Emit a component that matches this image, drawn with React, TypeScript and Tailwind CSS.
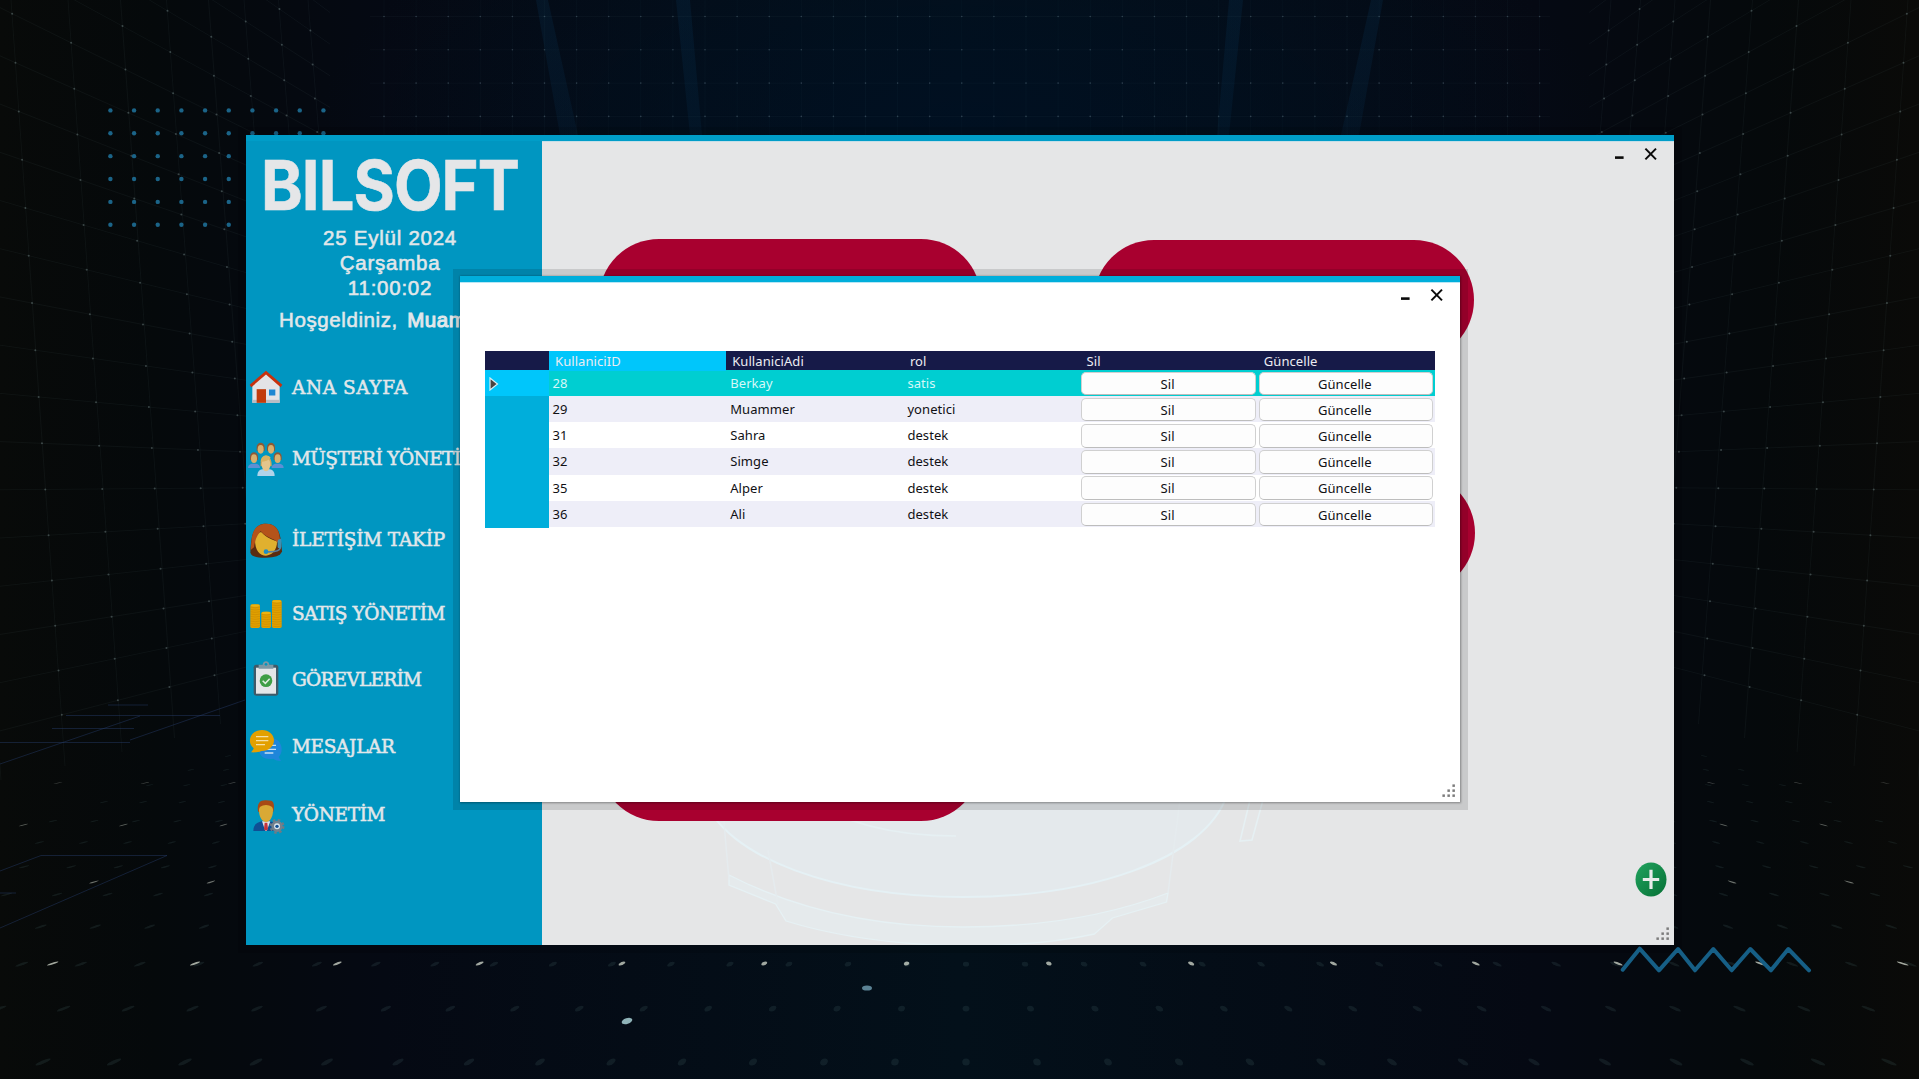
import React from "react";

const HORIZON = 482;
const CENTER = 960;

function Backdrop() {
  const columns = [-46, 18, 75, 127.5, 173.5, 215.5, 251, 285.5, 315];
  const rows = Array.from({ length: 21 }, (_, i) => 88.7 + 44.5 * (i - 6));
  const walls: React.ReactNode[] = [];
  const rowY = (base: number, x: number) => HORIZON + ((base - HORIZON) * (CENTER - x)) / (CENTER - 74);
  rows.forEach((base, i) => {
    if (base > 800) return;
    walls.push(<line key={"r" + i} x1={-10} y1={rowY(base, -10)} x2={330} y2={rowY(base, 330)} stroke="#8fb0b8" strokeOpacity={0.055} />);
    columns.forEach((c, j) => {
      const y0 = rowY(base, c);
      const x = c + 0.07 * (y0 - 100);
      walls.push(<circle key={"d" + i + "-" + j} cx={x} cy={rowY(base, x)} r={1} fill="#8fa5a5" fillOpacity={0.36} />);
    });
  });
  columns.forEach((c, j) =>
    walls.push(<line key={"c" + j} x1={c - 7} y1={0} x2={c + 47} y2={780 - j * 14} stroke="#8fb0b8" strokeOpacity={0.055} />),
  );

  const floor: React.ReactNode[] = [];
  for (let n = 0; n < 14; n++) {
    const d = 1 / (0.001724 + 0.000175 * n);
    const step = d * 0.1224;
    const y = HORIZON + d;
    for (let k = -22; k <= 22; k++) {
      const x = 966 + k * step;
      if (x < -20 || x > 1940) continue;
      floor.push(
        <ellipse key={n + "f" + k} rx={d * 0.0065} ry={d * d * 0.0000105} fill="#5f8584" fillOpacity={0.15} transform={`matrix(1 0 ${((x - CENTER) / d) * 1.2} 1 ${x} ${y})`} />,
      );
    }
  }
  const bright = [
    { y: 963.5, step: 142.3, x: 977.7 + 71.15, o: 0.75, r: 2.6 },
    { y: 882, step: 117, x: 970 + 60, o: 0.5, r: 2 },
    { y: 825, step: 100, x: 1023.5, o: 0.4, r: 1.6 },
    { y: 783, step: 87, x: 1015, o: 0.3, r: 1.4 },
  ];
  bright.forEach((b) => {
    for (let k = -13; k <= 13; k++) {
      const x = b.x + k * b.step;
      floor.push(
        <ellipse key={b.y + "b" + k} rx={b.r} ry={b.r * 0.8} fill="#d5dccf" fillOpacity={b.o} transform={`matrix(1 0 ${((x - CENTER) / (b.y - HORIZON)) * 1.3} 1 ${x} ${b.y})`} />,
      );
    }
  });

  const back: React.ReactNode[] = [];
  for (let j = 0; j < 4; j++) {
    const y = 16.5 + j * 33.3;
    back.push(<line key={"h" + j} x1={370} y1={y} x2={1550} y2={y} stroke="#8fb0b8" strokeOpacity={0.04} />);
    for (let i = 0; i < 37; i++) back.push(<circle key={j + "p" + i} cx={384 + i * 32.1} cy={y} r={0.8} fill="#8fa5b5" fillOpacity={0.3} />);
  }
  for (let i = 0; i < 37; i++)
    back.push(<line key={"v" + i} x1={384 + i * 32.1} y1={0} x2={384 + i * 32.1} y2={135} stroke="#8fb0b8" strokeOpacity={0.03} />);

  const dots: React.ReactNode[] = [];
  for (let r = 0; r < 6; r++)
    for (let c = 0; c < 10; c++) dots.push(<circle key={r + "g" + c} cx={110.4 + c * 23.67} cy={110.4 + r * 22.87} r={2.2} fill="#1b6488" />);

  return (
    <svg className="absolute inset-0 h-full w-full" viewBox="0 0 1919 1079">
      <defs>
        <linearGradient id="base" x1="0" x2="1">
          <stop offset="0" stopColor="#080a09" />
          <stop offset="0.08" stopColor="#05090b" />
          <stop offset="0.2" stopColor="#050913" />
          <stop offset="0.5" stopColor="#03101a" />
          <stop offset="0.8" stopColor="#050913" />
          <stop offset="0.92" stopColor="#05090b" />
          <stop offset="1" stopColor="#0a0a08" />
        </linearGradient>
        <radialGradient id="glow" cx="0.5" cy="0.5" r="0.5">
          <stop offset="0" stopColor="#001022" stopOpacity="0.9" />
          <stop offset="1" stopColor="#001022" stopOpacity="0" />
        </radialGradient>
        <linearGradient id="beam" x1="0" y1="0" x2="0" y2="1">
          <stop offset="0" stopColor="#08385c" stopOpacity="0.22" />
          <stop offset="1" stopColor="#08385c" stopOpacity="0.16" />
        </linearGradient>
      </defs>
      <rect width="1919" height="1079" fill="url(#base)" />
      <ellipse cx="960" cy="120" rx="640" ry="260" fill="url(#glow)" />
      <path d="M548 0 L578 135 H560 L536 0Z M690 0 L702 135 H690 L676 0Z M1229 0 L1217 135 H1229 L1243 0Z M1371 0 L1341 135 H1359 L1383 0Z" fill="url(#beam)" />
      {back}
      <g>{walls}</g>
      <g transform="matrix(-1 0 0 1 1919 0)">{walls}</g>
      {floor}
      <g fill="none" stroke="#2a4478" strokeOpacity="0.4">
        <path d="M0 871 L41 855.5 H167 L0 928 M0 893 H16 M0 742.5 H130 M52 728.5 H134 M66 715.5 H220 M108 705 H148 M0 764 L140 716 M130 740 L245 700" />
      </g>
      <ellipse cx="867" cy="988" rx="5" ry="2.6" fill="#5b8294" />
      <ellipse cx="627" cy="1021" rx="5.5" ry="2.8" fill="#8fb3b8" transform="rotate(-18 627 1021)" />
      {dots}
    </svg>
  );
}

function Zigzag() {
  return (
    <svg className="absolute left-[1620px] top-[945px] h-[30px] w-[192px]" viewBox="1620 945 192 30">
      <path
        d="M1622.7 969.7 L1639.7 948.7 L1659 970.3 L1678 949 L1695 970.3 L1713.3 949 L1731.7 970.3 L1750.3 949 L1771 970.3 L1788.3 949 L1809 970.3"
        fill="none"
        stroke="#165f86"
        strokeWidth="4"
        strokeLinecap="round"
        strokeLinejoin="round"
      />
    </svg>
  );
}

function WindowButtons() {
  return (
    <svg className="h-[14px] w-[44px]" viewBox="0 0 44 14" fill="none" stroke="#0a0a0a">
      <path d="M1 10.6 H9.6" strokeWidth="2.6" />
      <path d="M31.4 1.6 L42 12.4 M42 1.6 L31.4 12.4" strokeWidth="2" />
    </svg>
  );
}

function Grip() {
  return (
    <svg className="h-[13px] w-[13px]" viewBox="0 0 13 13" fill="#7c7c7c">
      <rect x="10.4" y="0.4" width="2.5" height="2.5" />
      <rect x="5.4" y="5.4" width="2.5" height="2.5" />
      <rect x="10.4" y="5.4" width="2.5" height="2.5" />
      <rect x="0.4" y="10.4" width="2.5" height="2.5" />
      <rect x="5.4" y="10.4" width="2.5" height="2.5" />
      <rect x="10.4" y="10.4" width="2.5" height="2.5" />
    </svg>
  );
}

function Icon({ box, children }: { box: string; children: React.ReactNode }) {
  return (
    <svg className="h-9 w-9 shrink-0 overflow-visible" viewBox={box}>
      {children}
    </svg>
  );
}

const house = (
  <Icon box="24 58.5 108 108">
    <path d="M37 105 L78 70 L119 105 V160 H37Z" fill="#e3e3e6" />
    <path d="M37 151 H119 V160 H37Z" fill="#b9bcc4" />
    <path d="M78 64 L127 106 L122 113 L78 75 L34 113 L29 106Z" fill="#c8310d" />
    <rect x="50" y="119" width="28" height="41" fill="#c23c0c" />
    <rect x="87" y="120" width="19" height="18" fill="#1c87d2" />
  </Icon>
);

const person = (x: number, y: number, hair: string, shirt: string) => (
  <g transform={`translate(${x} ${y})`}>
    <path d="M-18 36 C-18 24 -8 23 0 23 C8 23 18 24 18 36Z" fill={shirt} />
    <path d="M-12 2 C-12 -16 12 -16 12 2 V12 H-12Z" fill={hair} />
    <ellipse cx="0" cy="8" rx="9" ry="13" fill="#d9b06d" />
  </g>
);

const people = (
  <Icon box="24 273 108 108">
    {person(62, 293, "#8b5a35", "#0096c1")}
    {person(93, 293, "#8b5a35", "#0096c1")}
    {person(42, 321, "#8d5938", "#5e8fd4")}
    {person(113, 321, "#8d5938", "#5e8fd4")}
    <path d="M52 381 C52 362 64 360 78 360 C92 360 104 362 104 381Z" fill="#b0d3ea" />
    <path d="M62 352 C58 310 97 308 95 352Z" fill="#cfa55a" />
    <ellipse cx="78" cy="346" rx="13" ry="21" fill="#e3c58c" />
    <path d="M62 338 C76 338 86 334 92 326 C84 315 62 318 62 338Z" fill="#d8b262" />
  </Icon>
);

const agent = (
  <Icon box="24 516.9 108 108">
    <path d="M31 612 C33 560 40 525 78 525 C118 525 123 562 126 608 C122 622 104 627 78 627 C50 627 36 624 31 612Z" fill="#5a2c10" />
    <path d="M45 570 C47 556 60 548 66 552 C80 568 96 572 111 578 C112 605 94 621 78 621 C60 621 44 606 45 570Z" fill="#e0b02f" />
    <path d="M34 580 C36 542 52 525 78 525 C108 525 120 544 120 580 L116 588 C110 568 82 572 62 547 C56 556 46 566 42 596 L32 604Z" fill="#b4531a" />
    <path d="M121 570 V598 C118 606 104 611 78 609" fill="none" stroke="#5b7f9e" strokeWidth="5" />
    <rect x="113" y="572" width="11" height="27" rx="5" fill="#3f8fb0" />
    <circle cx="78" cy="609" r="7" fill="#1d8fc4" />
  </Icon>
);

const coins = (x: number, top: number) => {
  const lines = [];
  for (let y = top + 8; y < 114; y += 7) lines.push(<path key={y} d={`M${x} ${y} q14.5 4 29 0`} stroke="#c98600" strokeWidth="1.6" fill="none" />);
  return (
    <g>
      <rect x={x} y={top} width="29" height={118 - top} rx="5" fill="#e0a000" />
      <ellipse cx={x + 14.5} cy={top + 4} rx="13" ry="3.5" fill="#edb312" />
      {lines}
    </g>
  );
};

const bars = (
  <Icon box="24 18.9 108 108">
    {coins(31, 47)}
    {coins(64, 69)}
    {coins(96, 34)}
  </Icon>
);

const clipboard = (
  <Icon box="24 216.9 108 108">
    <rect x="41" y="228" width="74" height="93" rx="8" fill="#3f5a68" />
    <rect x="48" y="237" width="60" height="78" fill="#e4e6e8" />
    <path d="M56 228 H68 C69 214 87 214 88 228 H100 V240 H56Z" fill="#7d98a5" />
    <circle cx="78" cy="227" r="4" fill="#0096c1" />
    <circle cx="78" cy="276" r="19" fill="#3f9e45" />
    <path d="M68 276 L76 284 L89 270" fill="none" stroke="#dfeee0" strokeWidth="4.5" />
  </Icon>
);

const chat = (
  <Icon box="24 417 108 108">
    <path d="M92 447 C112 447 125 462 125 481 C125 492 121 499 116 504 L123 516 C110 515 104 512 100 509 C72 514 58 500 57 484Z" fill="#1f86da" />
    <path d="M88 469 H108 M80 481 H108 M74 492 H100" stroke="#c8dff2" strokeWidth="4" />
    <path d="M66 423 C86 423 102 437 102 454 C102 473 84 487 64 486 C56 490 44 491 33 490 C38 484 41 480 41 478 C18 460 32 423 66 423Z" fill="#e3a000" />
    <path d="M48 443 H85 M48 455 H85 M48 467 H75" stroke="#f5dfa6" strokeWidth="3.5" />
  </Icon>
);

const manager = (
  <Icon box="24 621 108 108">
    <path d="M40 726 C40 706 52 700 66 697 H90 C104 700 116 706 116 726Z" fill="#0f4f94" />
    <path d="M66 697 H91 L80 726 H76Z" fill="#dfe3ea" />
    <path d="M74 701 H82 L84 720 L78 726 L72 720Z" fill="#c4343c" />
    <path d="M54 668 C50 640 62 633 78 634 L94 635 C104 640 103 656 100 668Z" fill="#a84a15" />
    <path d="M57 664 C57 652 64 650 78 648 C92 650 99 652 99 664 C99 684 90 699 78 699 C66 699 57 684 57 664Z" fill="#d9a935" />
    <circle cx="111" cy="712" r="19" fill="none" stroke="#6d7a85" strokeWidth="7" strokeDasharray="7.5 7.42" />
    <circle cx="111" cy="712" r="12.5" fill="none" stroke="#74808c" strokeWidth="9" />
    <circle cx="111" cy="712" r="9" fill="#dde4ec" />
    <circle cx="111" cy="712" r="5" fill="#0f4f94" />
  </Icon>
);

const menu = [
  { label: "ANA SAYFA", icon: house, gap: "mt-0", track: "tracking-[0.55px]" },
  { label: "MÜŞTERİ YÖNETİM", icon: people, gap: "mt-[35.5px]", track: "tracking-[-0.6px]" },
  { label: "İLETİŞİM TAKİP", icon: agent, gap: "mt-[45.3px]", track: "tracking-[-0.2px]" },
  { label: "SATIŞ YÖNETİM", icon: bars, gap: "mt-[38px]", track: "tracking-[-0.45px]" },
  { label: "GÖREVLERİM", icon: clipboard, gap: "mt-[30px]", track: "tracking-[-0.75px]" },
  { label: "MESAJLAR", icon: chat, gap: "mt-[30.7px]", track: "tracking-[-0.35px]" },
  { label: "YÖNETİM", icon: manager, gap: "mt-[32px]", track: "tracking-[-0.35px]" },
];

function Sidebar() {
  return (
    <aside className="h-full w-[296px] shrink-0 overflow-hidden bg-[#0096c1] text-[#e2e7ea]">
      <h1 className="ml-[14.5px] mt-[9px] h-[64px] w-[260px] origin-left scale-x-[0.915] whitespace-nowrap font-['Inter'] text-[69px] font-bold leading-[70px] tracking-[-1px] text-[#e5e6e8] [-webkit-text-stroke:0.6px_#e5e6e8]">
        BILSOFT
      </h1>
      <div className="mt-[11px] w-[288px] text-center font-['Liberation_Sans'] text-[20.5px] font-normal leading-[25px] tracking-[0.75px] [-webkit-text-stroke:0.55px_#e2e7ea]">
        <p>25 Eylül 2024</p>
        <p>Çarşamba</p>
        <p>11:00:02</p>
      </div>
      <p className="ml-[33px] mt-[7px] whitespace-nowrap font-['Liberation_Sans'] text-[20.5px] leading-[25px] tracking-[0.6px] [-webkit-text-stroke:0.55px_#e2e7ea]">
        Hoşgeldiniz, <span className="ml-[3px] [-webkit-text-stroke:1px_#e2e7ea]">Muammer</span>
      </p>
      <nav className="mt-[36.5px] flex flex-col pl-[2px]">
        {menu.map((m) => (
          <a key={m.label} className={`flex h-9 items-center gap-2 whitespace-nowrap font-['DejaVu_Serif'] text-[18.5px] leading-9 [-webkit-text-stroke:0.5px_#e2e7ea] ${m.gap} ${m.track}`}>
            {m.icon}
            <span className="pt-[2px]">{m.label}</span>
          </a>
        ))}
      </nav>
    </aside>
  );
}

function Jar() {
  return (
    <svg className="absolute bottom-0 left-[150px] h-[150px] w-[600px]" viewBox="692 795 600 150" fill="none">
      <path d="M729 875 Q830 927 963 927 Q1080 927 1168 893 L1166.5 902 L1112.5 918 L1094.5 934 Q1040 946 963 946 Q860 944 786 921 L775.6 904 L729 885Z" fill="#e5eaec" stroke="#e6f1f4" strokeWidth="1.3" />
      <path d="M702 795 C725 860 840 897 963 897 C1090 897 1205 860 1227 795Z" fill="#e4e9ec" stroke="#e5f1f5" strokeWidth="2" />
      <path d="M722 800 L729 880 M1180 800 L1168 893 M768 850 L778 905" stroke="#e5ebee" strokeWidth="1.5" />
      <path d="M800 795 Q860 836 956 836 M1250 800 L1240 841 L1252 840 L1263 800" stroke="#e6f0f3" strokeWidth="1.6" />
    </svg>
  );
}

function MainWindow() {
  return (
    <section className="absolute left-[246px] top-[135px] flex h-[810px] w-[1428px] flex-col bg-[#e5e6e7] shadow-[0_0_0_8px_rgba(0,0,0,0.12)]">
      <div className="h-[6px] w-full shrink-0 bg-[#009dc8]" />
      <div className="flex min-h-0 flex-1">
        <Sidebar />
        <main className="relative flex-1 border-t border-[#c5dfe8]">
          <Jar />
          <div className="absolute left-[57px] top-[97px] h-[120px] w-[382px] rounded-[60px] bg-[#a8002f]" />
          <div className="absolute left-[552px] top-[98px] h-[120px] w-[380px] rounded-[60px] bg-[#a8002f]" />
          <div className="absolute left-[552px] top-[331px] h-[120px] w-[381px] rounded-[60px] bg-[#a8002f]" />
          <div className="absolute left-[57px] top-[559px] h-[120px] w-[382px] rounded-[60px] bg-[#a8002f]" />
          <div className="flex justify-end pr-[16px] pt-[5px]">
            <WindowButtons />
          </div>
          <svg className="absolute bottom-[48px] right-[7px] h-[35px] w-[32px]" viewBox="0 0 32 35">
            <defs>
              <linearGradient id="add" x1="0" y1="0" x2="1" y2="1">
                <stop offset="0" stopColor="#21a35f" />
                <stop offset="1" stopColor="#067035" />
              </linearGradient>
            </defs>
            <ellipse cx="16" cy="17.5" rx="15.5" ry="17" fill="url(#add)" />
            <path d="M16 7.8 V27 M7.8 17.5 H24.2" stroke="#e8ebe9" strokeWidth="3.2" />
          </svg>
          <div className="absolute bottom-[5px] right-[5px]">
            <Grip />
          </div>
        </main>
      </div>
    </section>
  );
}

const users = [
  ["28", "Berkay", "satis"],
  ["29", "Muammer", "yonetici"],
  ["31", "Sahra", "destek"],
  ["32", "Simge", "destek"],
  ["35", "Alper", "destek"],
  ["36", "Ali", "destek"],
];

const COLS = "grid grid-cols-[64px_177.2px_177.2px_177.2px_177.2px_177.2px]";

function CellButton({ children }: { children: React.ReactNode }) {
  return (
    <div className="flex items-center pl-[0.8px]">
      <button className="h-[23.5px] w-[174.5px] rounded-[5px] border border-b-[1.5px] border-[#d0d0d0] border-b-[#bdbdbd] bg-[#fdfdfd] pr-[2px] text-center leading-[22px] text-[#101014]">
        {children}
      </button>
    </div>
  );
}

function UsersTable() {
  return (
    <div className="w-[950px] font-['Noto_Sans'] text-[13px] tracking-[0.08px]">
      <div className={`${COLS} h-[19px] bg-[#161a48] leading-[20px] text-[#ececf2]`}>
        <span />
        <span className="bg-[#00c6fb] pl-[6px]">KullaniciID</span>
        <span className="pl-[6px]">KullaniciAdi</span>
        <span className="pl-[6.5px]">rol</span>
        <span className="pl-[6px]">Sil</span>
        <span className="pl-[6px]">Güncelle</span>
      </div>
      {users.map((u, i) => {
        const selected = i === 0;
        const tone = selected ? "bg-[#00ced1] text-[#d6f8f8]" : i % 2 ? "bg-[#eeeef8] text-[#101014]" : "bg-white text-[#101014]";
        return (
          <div key={u[0]} className={`${COLS} h-[26.17px] leading-[27px] ${tone}`}>
            <span className={`flex items-center pl-1 ${selected ? "bg-[#00c6fb]" : "bg-[#00aedb]"}`}>
              {selected && (
                <svg className="h-[14px] w-[10px]" viewBox="0 0 10 14">
                  <path d="M1 1 L8.5 7 L1 13Z" fill="#4a4340" stroke="#d8eef5" strokeWidth="1.2" />
                </svg>
              )}
            </span>
            <span className="pl-[3.5px]">{u[0]}</span>
            <span className="pl-1">{u[1]}</span>
            <span className="pl-1">{u[2]}</span>
            <CellButton>Sil</CellButton>
            <CellButton>Güncelle</CellButton>
          </div>
        );
      })}
    </div>
  );
}

function UsersWindow() {
  return (
    <section className="absolute left-[460px] top-[276px] flex h-[526px] w-[1000px] flex-col bg-white shadow-[0.5px_0.5px_2px_0.5px_rgba(0,0,0,0.35),0.5px_0.5px_0_7.5px_rgba(0,0,0,0.12)]">
      <div className="h-[6px] shrink-0 bg-[#00aedb]" />
      <div className="flex flex-1 flex-col border-t border-[#b8e6f4]">
        <div className="flex justify-end pr-[16px] pt-[5px]">
          <WindowButtons />
        </div>
        <div className="mt-[49px] pl-[25px]">
          <UsersTable />
        </div>
        <div className="mt-auto flex justify-end pb-[5px] pr-[5px]">
          <Grip />
        </div>
      </div>
    </section>
  );
}

export default function App() {
  return (
    <div className="relative h-[1079px] w-[1919px] overflow-hidden bg-[#05090c]">
      <Backdrop />
      <MainWindow />
      <Zigzag />
      <UsersWindow />
    </div>
  );
}
